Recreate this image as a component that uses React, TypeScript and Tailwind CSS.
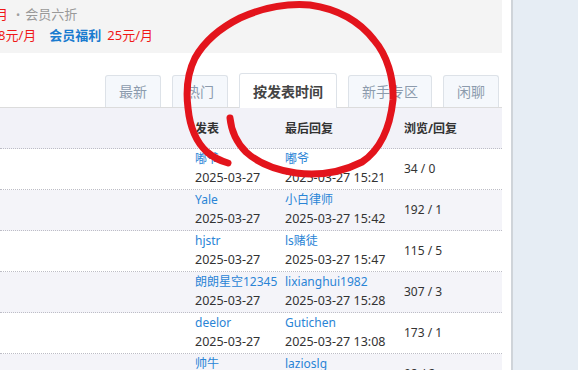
import React from "react";

const rows = [
  { author: "嘟爷", last: "嘟爷", time: "2025-03-27 15:21", views: "34 / 0" },
  { author: "Yale", last: "小白律师", time: "2025-03-27 15:42", views: "192 / 1" },
  { author: "hjstr", last: "ls赌徒", time: "2025-03-27 15:47", views: "115 / 5" },
  { author: "朗朗星空12345", last: "lixianghui1982", time: "2025-03-27 15:28", views: "307 / 3" },
  { author: "deelor", last: "Gutichen", time: "2025-03-27 13:08", views: "173 / 1" },
  { author: "帅牛", last: "lazioslg", time: "2025-03-27 12:40", views: "98 / 2" },
];

const tabs = [
  { label: "最新", active: false },
  { label: "热门", active: false },
  { label: "按发表时间", active: true },
  { label: "新手专区", active: false },
  { label: "闲聊", active: false },
];

function Tab({ label, active }: { label: string; active: boolean }) {
  if (active) {
    return (
      <div className="h-[35px] -mb-px px-[13px] flex items-center bg-white border border-b-0 border-[#dde2e8] rounded-t-[3px] text-[14px] font-bold text-[#444]">
        {label}
      </div>
    );
  }
  return (
    <div className="h-[32px] px-[13px] flex items-center bg-[#f5f8fc] border border-b-0 border-[#dde2e8] rounded-t-[3px] text-[14px] text-[#8c9bad]">
      {label}
    </div>
  );
}

export default function App() {
  return (
    <div className="relative w-[578px] h-[370px] overflow-hidden flex bg-[#e6edf4] font-['Noto_Sans','Noto_Sans_CJK_SC',sans-serif]">
      {/* main column */}
      <div className="w-[513px] shrink-0 bg-white border-r-2 border-[#cfd4d9] pr-[9px]">
        {/* promo box */}
        <div className="h-[53px] bg-[#f4f4f4] text-[13px] leading-none pt-[7px]">
          <div className="flex items-center h-[14px] -ml-[5px]">
            <span className="text-[#f01818]">月</span>
            <span className="text-[#a0a0a0] ml-[8px] mr-[5px] text-[11px]">•</span>
            <span className="text-[#999]">会员六折</span>
          </div>
          <div className="flex items-center h-[14px] mt-[7px] -ml-[2px]">
            <span className="text-[#f01818]">8元/月</span>
            <span className="text-[#1a7bcf] font-bold ml-[13px]">会员福利</span>
            <span className="text-[#f01818] ml-[6px]">25元/月</span>
          </div>
        </div>

        {/* tabs */}
        <div className="h-[55px] flex items-end justify-end gap-[11px] pr-[3px] border-b border-[#dcdcdc]">
          {tabs.map((t) => (
            <Tab key={t.label} label={t.label} active={t.active} />
          ))}
        </div>

        {/* header */}
        <div className="grid grid-cols-[195px_90px_119px_1fr] h-[41px] items-center bg-[#f2f2f8] border-b border-dotted border-[#bdbdc6] text-[12px] font-bold text-[#333] pt-[2px]">
          <div />
          <div>发表</div>
          <div>最后回复</div>
          <div>浏览/回复</div>
        </div>

        {/* rows */}
        {rows.map((r, i) => (
          <div
            key={i}
            className={`grid grid-cols-[195px_90px_119px_1fr] h-[41px] items-center border-b border-dotted border-[#bdbdc6] ${i % 2 === 1 ? "bg-[#f4f4f9]" : "bg-white"}`}
          >
            <div />
            <div className="flex flex-col leading-none">
              <span className="text-[12px] text-[#2a84d6] h-[20px] pt-[4px]">{r.author}</span>
              <span className="text-[12.5px] text-[#333] h-[20px] pt-[3px]">2025-03-27</span>
            </div>
            <div className="flex flex-col leading-none">
              <span className="text-[12px] text-[#2a84d6] h-[20px] pt-[4px]">{r.last}</span>
              <span className="text-[12.5px] text-[#333] h-[20px] pt-[3px] whitespace-nowrap">{r.time}</span>
            </div>
            <div className="text-[12px] text-[#333]">{r.views}</div>
          </div>
        ))}
      </div>

      {/* hand-drawn annotation */}
      <svg className="absolute inset-0 pointer-events-none" width="578" height="370" viewBox="0 0 578 370">
        <path
          d="M230 118 C231 128 234 140 246 152 C258 163 276 170 296 173 C318 176 342 172 362 162 C380 150 390 128 393 100 C394 78 387 55 374 40 C360 22 338 9 310 5 C285 3 262 8 240 18 C220 28 204 42 195 58 C187 74 186 92 188 108 C190 128 196 142 207 152 C214 158 221 161 228 163"
          fill="none"
          stroke="#e3141c"
          strokeWidth="7"
          strokeLinecap="round"
          strokeLinejoin="round"
        />
      </svg>
    </div>
  );
}
